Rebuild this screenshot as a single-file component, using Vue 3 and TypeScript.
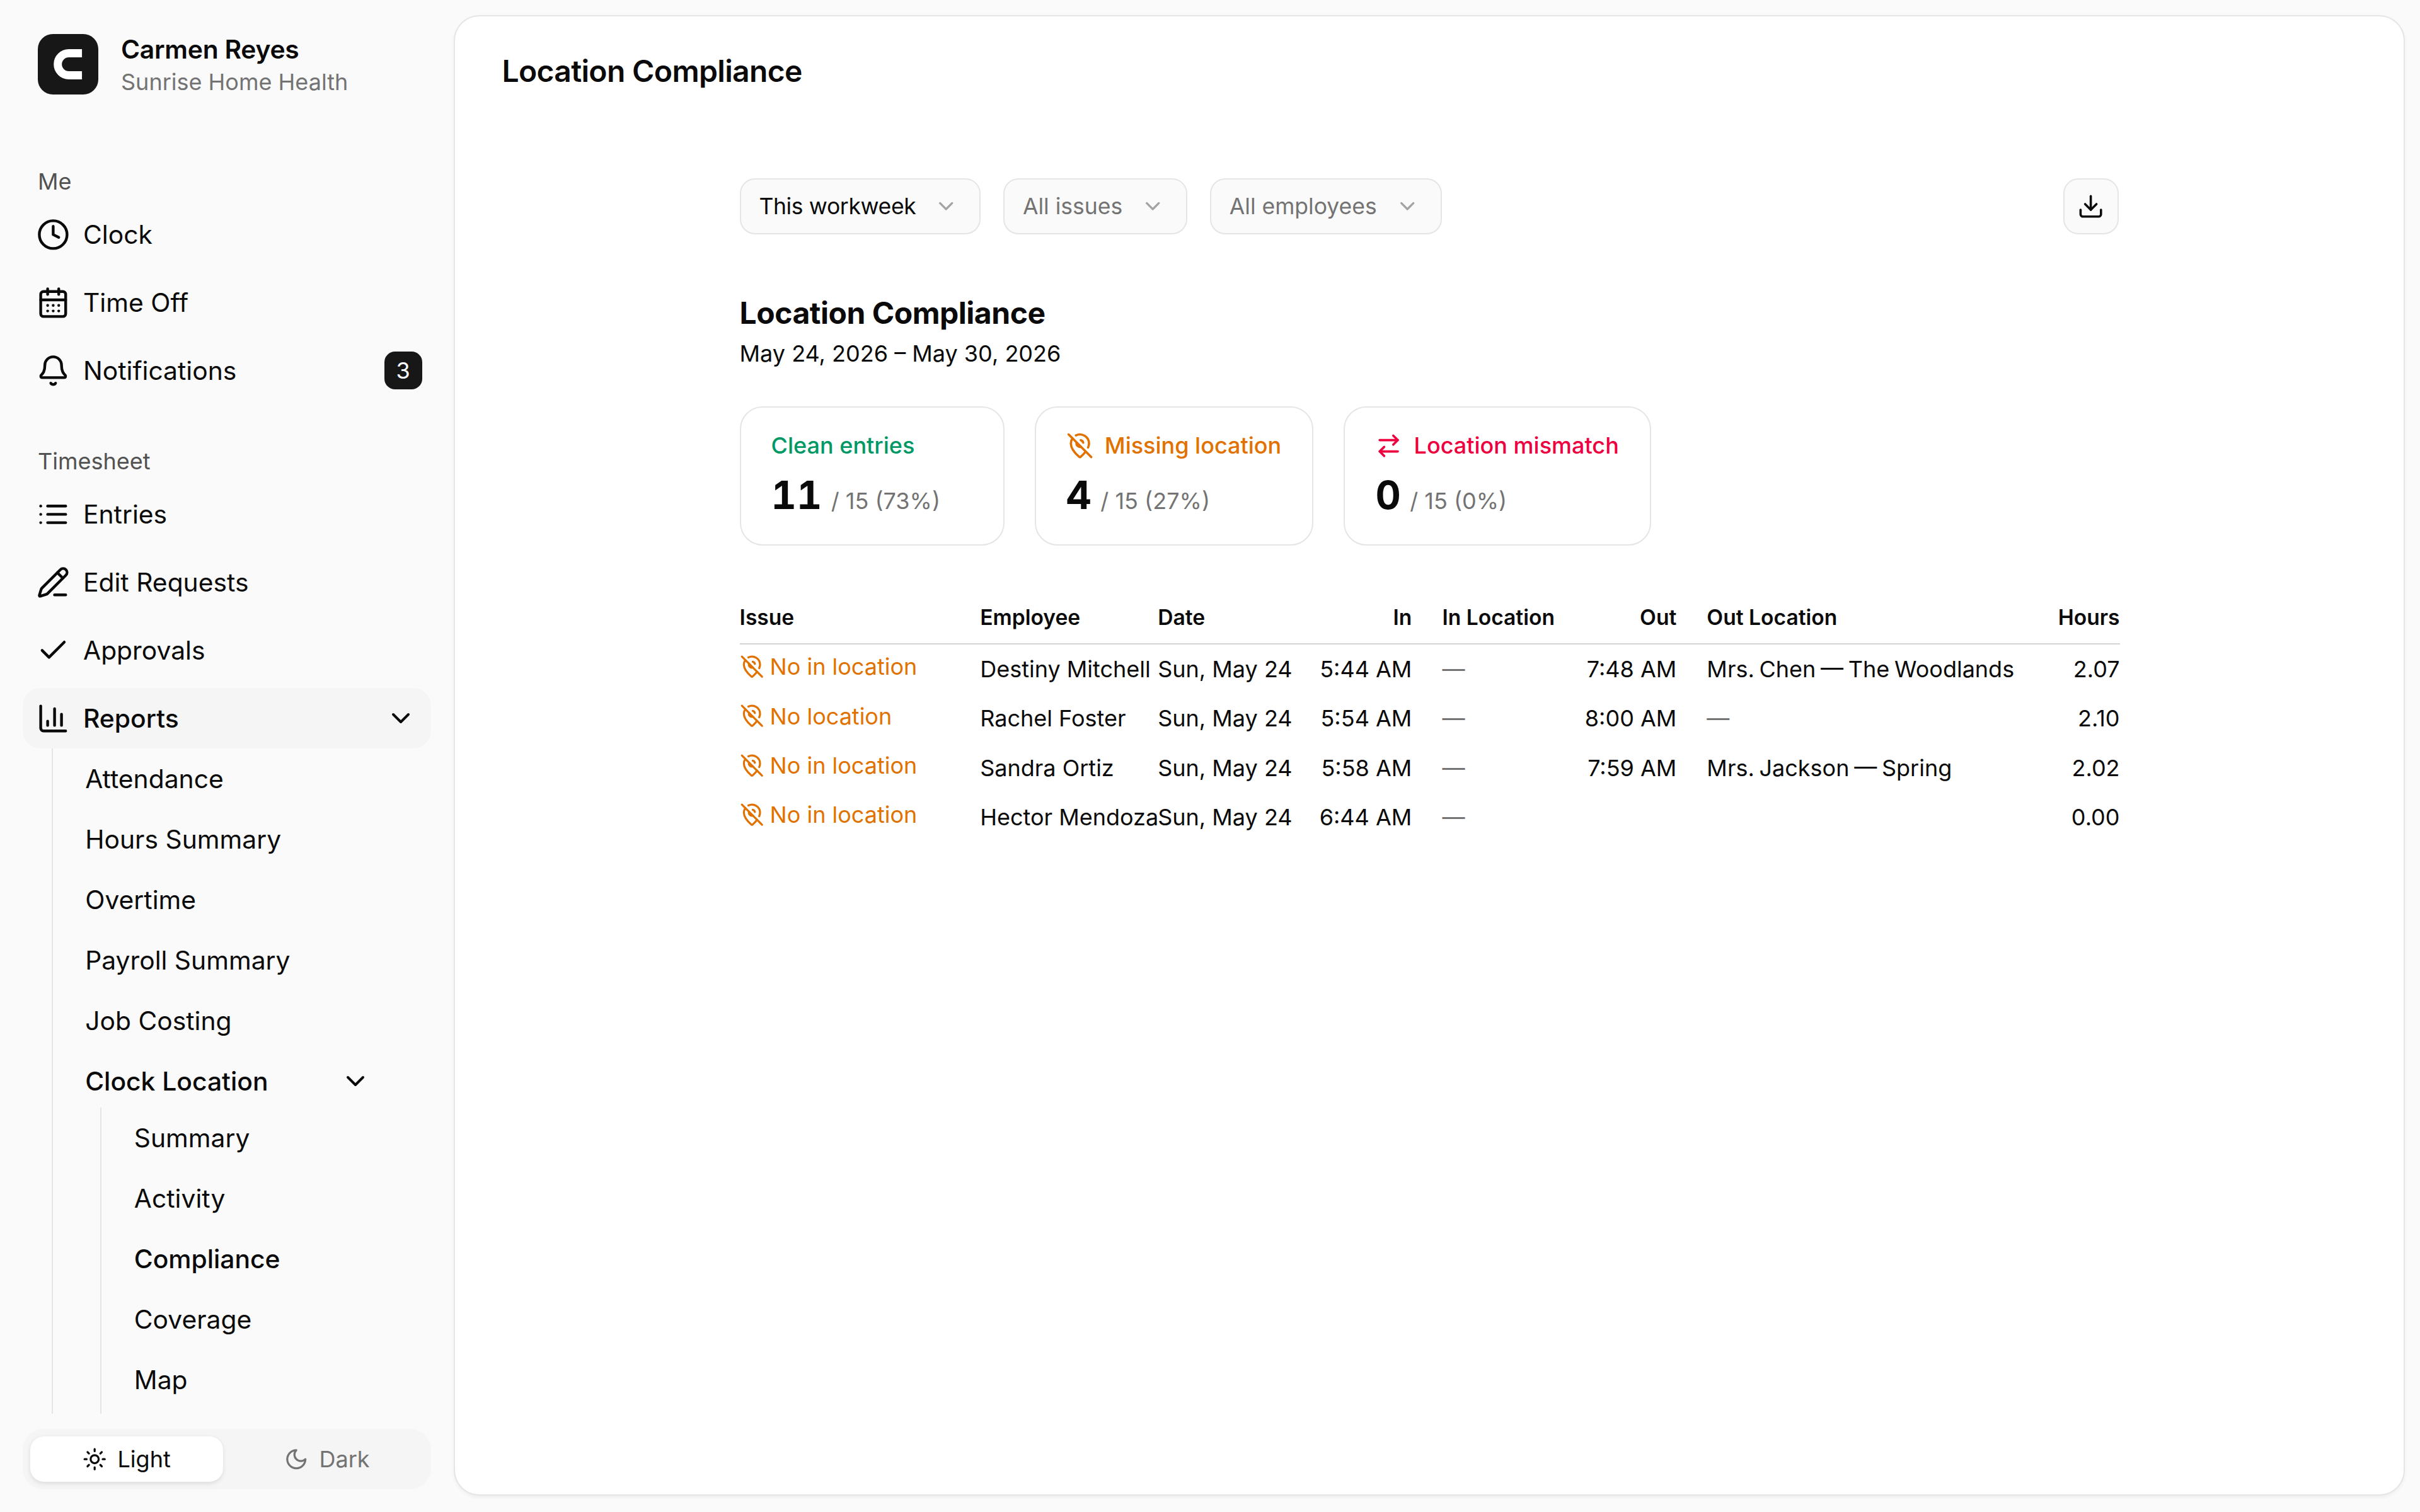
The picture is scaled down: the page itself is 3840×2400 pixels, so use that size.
<script setup lang="ts">
import { h } from 'vue'

type IconName = 'clock' | 'calendar' | 'bell' | 'list' | 'pencil' | 'check' | 'chart' | 'chevron' | 'sun' | 'moon' | 'download' | 'pinOff' | 'swap'

const iconPaths: Record<IconName, string[]> = {
  clock: ['M12 2a10 10 0 1 0 0 20 10 10 0 1 0 0-20', 'M12 6v6l4 2'],
  calendar: ['M8 2v4', 'M16 2v4', 'M5 4h14a2 2 0 0 1 2 2v14a2 2 0 0 1-2 2H5a2 2 0 0 1-2-2V6a2 2 0 0 1 2-2z', 'M3 10h18', 'M8 14h.01', 'M12 14h.01', 'M16 14h.01', 'M8 18h.01', 'M12 18h.01', 'M16 18h.01'],
  bell: ['M10.268 21a2 2 0 0 0 3.464 0', 'M3.262 15.326A1 1 0 0 0 4 17h16a1 1 0 0 0 .74-1.673C19.41 13.956 18 12.499 18 8A6 6 0 0 0 6 8c0 4.499-1.411 5.956-2.738 7.326'],
  list: ['M3 12h.01', 'M3 18h.01', 'M3 6h.01', 'M8 12h13', 'M8 18h13', 'M8 6h13'],
  pencil: ['M13 21h8', 'm15 5 4 4', 'M21.174 6.812a1 1 0 0 0-3.986-3.987L3.842 16.174a2 2 0 0 0-.5.83l-1.321 4.352a.5.5 0 0 0 .623.622l4.353-1.32a2 2 0 0 0 .83-.497z'],
  check: ['M20 6 9 17l-5-5'],
  chart: ['M3 3v16a2 2 0 0 0 2 2h16', 'M18 17V9', 'M13 17V5', 'M8 17v-3'],
  chevron: ['m6 9 6 6 6-6'],
  sun: ['M12 8a4 4 0 1 0 0 8 4 4 0 1 0 0-8', 'M12 2v2', 'M12 20v2', 'm4.93 4.93 1.41 1.41', 'm17.66 17.66 1.41 1.41', 'M2 12h2', 'M20 12h2', 'm6.34 17.66-1.41 1.41', 'm19.07 4.93-1.41 1.41'],
  moon: ['M12 3a6 6 0 0 0 9 9 9 9 0 1 1-9-9Z'],
  download: ['M12 15V3', 'M21 15v4a2 2 0 0 1-2 2H5a2 2 0 0 1-2-2v-4', 'm7 10 5 5 5-5'],
  pinOff: ['M12.75 7.09a3 3 0 0 1 2.16 2.16', 'M17.072 17.072c-1.634 2.17-3.527 3.912-4.471 4.727a1 1 0 0 1-1.202 0C9.539 20.193 4 14.993 4 10a8 8 0 0 1 1.432-4.568', 'm2 2 20 20', 'M8.475 2.818A8 8 0 0 1 20 10c0 1.183-.31 2.377-.81 3.533', 'M9.13 9.13a3 3 0 0 0 3.74 3.74'],
  swap: ['m16 3 4 4-4 4', 'M20 7H4', 'm8 21-4-4 4-4', 'M4 17h16'],
}

const Icon = (props: { name: IconName, size?: number }) => {
  const size = props.size ?? 22
  return h('svg', {
    width: size,
    height: size,
    viewBox: '0 0 24 24',
    fill: 'none',
    stroke: 'currentColor',
    'stroke-width': 2,
    'stroke-linecap': 'round',
    'stroke-linejoin': 'round',
  }, iconPaths[props.name].map(d => h('path', { d })))
}
Icon.props = ['name', 'size']

const meItems: Array<{ label: string, icon: IconName, badge?: number }> = [
  { label: 'Clock', icon: 'clock' },
  { label: 'Time Off', icon: 'calendar' },
  { label: 'Notifications', icon: 'bell', badge: 3 },
]
const sheetItems: Array<{ label: string, icon: IconName }> = [
  { label: 'Entries', icon: 'list' },
  { label: 'Edit Requests', icon: 'pencil' },
  { label: 'Approvals', icon: 'check' },
]
const reportItems = ['Attendance', 'Hours Summary', 'Overtime', 'Payroll Summary', 'Job Costing']
const locationItems = ['Summary', 'Activity', 'Compliance', 'Coverage', 'Map']
const filters = [
  { label: 'This workweek', active: true },
  { label: 'All issues', active: false },
  { label: 'All employees', active: false },
]
const rows = [
  { issue: 'No in location', name: 'Destiny Mitchell', date: 'Sun, May 24', in: '5:44 AM', out: '7:48 AM', outLoc: 'Mrs. Chen — The Woodlands', hours: '2.07' },
  { issue: 'No location', name: 'Rachel Foster', date: 'Sun, May 24', in: '5:54 AM', out: '8:00 AM', outLoc: '—', hours: '2.10' },
  { issue: 'No in location', name: 'Sandra Ortiz', date: 'Sun, May 24', in: '5:58 AM', out: '7:59 AM', outLoc: 'Mrs. Jackson — Spring', hours: '2.02' },
  { issue: 'No in location', name: 'Hector Mendoza', date: 'Sun, May 24', in: '6:44 AM', out: '', outLoc: '', hours: '0.00' },
]
</script>

<template>
  <div class="app">
    <aside class="side">
      <div class="who">
        <svg class="logo" width="40" height="40" viewBox="0 0 40 40">
          <path d="M29.2 12.7H20.5A7.3 7.3 0 0 0 20.5 27.3H29.2" fill="none" stroke="#fff" stroke-width="5.4" />
        </svg>
        <div class="who-text">
          <div class="who-name">Carmen Reyes</div>
          <div class="who-org">Sunrise Home Health</div>
        </div>
      </div>

      <nav class="nav">
        <div class="group-label">Me</div>
        <div class="group">
          <a v-for="item in meItems" :key="item.label" class="row">
            <Icon :name="item.icon" />
            <span class="grow">{{ item.label }}</span>
            <span v-if="item.badge" class="badge">{{ item.badge }}</span>
          </a>
        </div>

        <div class="group-label second">Timesheet</div>
        <div class="group">
          <a v-for="item in sheetItems" :key="item.label" class="row">
            <Icon :name="item.icon" />
            <span class="grow">{{ item.label }}</span>
          </a>
          <a class="row open">
            <Icon name="chart" />
            <span class="grow">Reports</span>
            <Icon class="chev" name="chevron" />
          </a>
        </div>
        <div class="sub">
          <a v-for="item in reportItems" :key="item" class="sub-row">{{ item }}</a>
          <a class="sub-row current">
            <span class="grow">Clock Location</span>
            <Icon class="chev-sub" name="chevron" />
          </a>
          <div class="sub sub-inner">
            <a v-for="item in locationItems" :key="item" class="sub-row" :class="{ current: item === 'Compliance' }">{{ item }}</a>
          </div>
        </div>
      </nav>

      <div class="theme">
        <button class="theme-btn on"><Icon name="sun" :size="16" />Light</button>
        <button class="theme-btn off"><Icon name="moon" :size="16" />Dark</button>
      </div>
    </aside>

    <main class="card">
      <h1 class="title">Location Compliance</h1>
      <div class="content">
        <div class="filters">
          <button v-for="f in filters" :key="f.label" class="filter" :class="f.active ? 'set' : 'muted'">
            {{ f.label }}
            <Icon class="filter-chev" name="chevron" :size="16" />
          </button>
          <button class="export"><Icon name="download" :size="18" /></button>
        </div>

        <h2 class="heading">Location Compliance</h2>
        <div class="range">May 24, 2026 – May 30, 2026</div>

        <div class="stats">
          <div class="stat first">
            <div class="stat-label green">Clean entries</div>
            <div class="stat-value"><b class="num">11</b><span class="of">/ 15 (73%)</span></div>
          </div>
          <div class="stat">
            <div class="stat-label orange"><Icon name="pinOff" :size="18" />Missing location</div>
            <div class="stat-value"><b class="num">4</b><span class="of">/ 15 (27%)</span></div>
          </div>
          <div class="stat">
            <div class="stat-label pink"><Icon name="swap" :size="18" />Location mismatch</div>
            <div class="stat-value"><b class="num">0</b><span class="of">/ 15 (0%)</span></div>
          </div>
        </div>

        <table class="tbl">
          <colgroup>
            <col style="width: 159px">
            <col style="width: 117.5px">
            <col style="width: 95px">
            <col style="width: 93px">
            <col style="width: 87px">
            <col style="width: 88px">
            <col style="width: 212px">
            <col style="width: 61px">
          </colgroup>
          <thead>
            <tr>
              <th>Issue</th>
              <th>Employee</th>
              <th>Date</th>
              <th class="r">In</th>
              <th>In Location</th>
              <th class="r">Out</th>
              <th>Out Location</th>
              <th class="r end">Hours</th>
            </tr>
          </thead>
          <tbody>
            <tr v-for="row in rows" :key="row.name">
              <td><span class="issue"><Icon name="pinOff" :size="16" />{{ row.issue }}</span></td>
              <td>{{ row.name }}</td>
              <td>{{ row.date }}</td>
              <td class="r">{{ row.in }}</td>
              <td class="dash">—</td>
              <td class="r">{{ row.out }}</td>
              <td class="place" :class="{ dash: row.outLoc === '—' }">{{ row.outLoc }}</td>
              <td class="r end">{{ row.hours }}</td>
            </tr>
          </tbody>
        </table>
      </div>
    </main>
  </div>
</template>

<style>
html, body { margin: 0; background: #fafafa; }
</style>

<style scoped>
.app { zoom: 2.4; display: flex; width: 1600px; height: 1000px; background: #fafafa; color: #0a0a0a; font-family: Inter, "Liberation Sans", sans-serif; font-size: 17px; overflow: hidden; }
button { font: inherit; color: inherit; cursor: pointer; }
.grow { flex: 1; }

.side { width: 300px; flex: none; box-sizing: border-box; height: 1000px; padding: 22.5px 15px 15px; display: flex; flex-direction: column; }
.who { display: flex; align-items: center; gap: 15px; padding-left: 10px; height: 40px; flex: none; }
.who-text { margin-top: 2px; }
.logo { flex: none; border-radius: 10px; background: #171717; }
.who-name { font-weight: 600; font-size: 17px; line-height: 22px; letter-spacing: -.1px; }
.who-org { font-size: 15px; line-height: 22px; color: #737373; }

.nav { flex: 1; min-height: 0; overflow: hidden; margin-top: 47.5px; margin-bottom: 10px; }
.group-label { font-size: 15px; line-height: 20px; color: #525252; padding-left: 10px; margin-bottom: 5px; }
.group-label.second { margin-top: 30px; }
.group { display: flex; flex-direction: column; gap: 5px; }
.row { display: flex; align-items: center; gap: 9px; height: 40px; padding: 0 10px 0 9px; border-radius: 12px; }
.row.open { background: #f5f5f5; font-weight: 500; }
.chev { width: 20px; height: 20px; }
.badge { width: 25px; height: 25px; margin-right: -4px; border-radius: 7px; background: #171717; color: #fff; font-size: 15px; display: flex; align-items: center; justify-content: center; }

.sub { margin-left: 19px; border-left: 1px solid #e5e5e5; padding-left: 21.5px; }
.sub-row { display: flex; align-items: center; height: 40px; }
.sub-row.current { font-weight: 500; }
.chev-sub { width: 20px; height: 20px; margin-right: 40px; }
.sub-inner { margin-left: 10px; margin-top: -2.4px; padding-bottom: 2.4px; }

.theme { flex: none; display: flex; height: 40px; padding: 5px; box-sizing: border-box; border-radius: 14px; background: #f5f5f5; }
.theme-btn { flex: 1; border: 0; background: transparent; color: #737373; border-radius: 9px; display: flex; align-items: center; justify-content: center; gap: 7px; font-size: 15px; padding: 0; }
.theme-btn.on { flex: none; width: 127.5px; background: #fff; color: #0a0a0a; box-shadow: 0 1px 3px rgba(0, 0, 0, .1); }
.theme-btn.off { padding-left: 5px; }

.card { flex: 1; margin: 10px 10px 11px 0; border: 1px solid #e5e5e5; border-radius: 17px; background: #fff; box-shadow: 0 1px 2px rgba(0, 0, 0, .05); min-width: 0; }
.title { margin: 0; padding: 22px 31px 21px; font-size: 20px; line-height: 28px; font-weight: 600; letter-spacing: -.27px; }
.content { width: 912px; margin: 36px auto 0; }

.filters { display: flex; gap: 15px; align-items: center; }
.filter { height: 37px; display: flex; align-items: center; justify-content: space-between; gap: 12px; padding: 0 14px 0 12px; border: 1px solid #e5e5e5; border-radius: 10px; background: #fafafa; font-size: 14.8px; }
.filter.set { letter-spacing: -.15px; }
.filter.muted { color: #737373; }
.filter-chev { color: #a3a3a3; }
.export { margin-left: auto; width: 37px; height: 37px; padding: 0; border: 1px solid #e5e5e5; border-radius: 10px; background: #fafafa; display: flex; align-items: center; justify-content: center; }

.heading { margin: 38px 0 0; font-size: 20px; line-height: 28px; font-weight: 700; letter-spacing: -.2px; }
.range { margin-top: 3px; font-size: 15px; line-height: 20px; }

.stats { display: flex; gap: 20px; margin-top: 25px; }
.stat { box-sizing: border-box; height: 92px; padding: 15px 20.5px 15px 20px; border: 1px solid #e5e5e5; border-radius: 15px; }
.stat.first { min-width: 175px; }
.stat-label { display: flex; align-items: center; gap: 7.5px; font-size: 15px; line-height: 20px; font-weight: 500; }
.green { color: #009966; }
.orange { color: #e17100; }
.pink { color: #ec003f; }
.stat-value { display: flex; align-items: baseline; gap: 6px; margin-top: 5px; }
.num { font-size: 26px; line-height: 36px; font-weight: 700; font-variant-numeric: tabular-nums; }
.of { font-size: 15px; color: #737373; }

.tbl { margin-top: 30px; width: 912px; table-layout: fixed; border-collapse: collapse; font-size: 15px; }
.tbl th { height: 34.5px; padding: 0; text-align: left; font-size: 14px; font-weight: 600; border-bottom: 1px solid #d4d4d4; white-space: nowrap; }
.tbl td { height: 32.65px; padding: 0; white-space: nowrap; }
.tbl .r { text-align: right; padding-right: 20px; }
.tbl .end { padding-right: 0; }
.tbl .dash { color: #737373; }
.tbl .place { word-spacing: -1px; }
.issue { display: flex; align-items: center; gap: 4px; color: #e17100; margin-top: -3px; }
</style>
